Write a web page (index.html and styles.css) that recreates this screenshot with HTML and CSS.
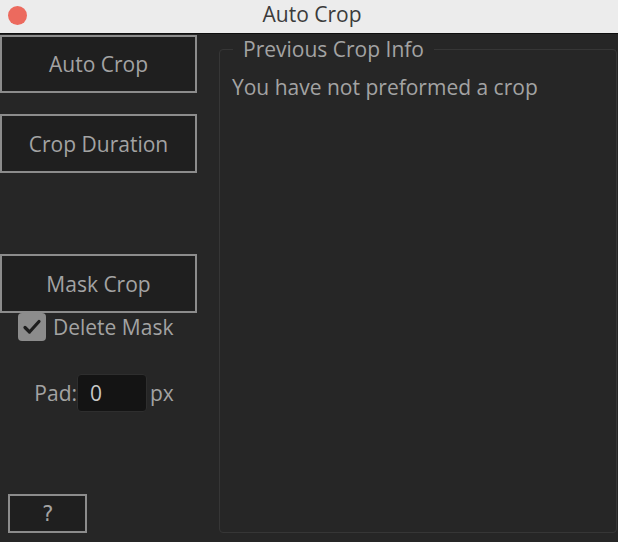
FILE: index.html
```html
<!DOCTYPE html>
<html lang="en">

<head>
  <meta charset="UTF-8">
  <meta name="viewport" content="width=device-width, initial-scale=1.0">
  <title>Auto Crop</title>
  <link rel="stylesheet" href="styles.css">
</head>

<body>
  <header class="titlebar">
    <span class="close-dot"></span>
    <span class="title">Auto Crop</span>
  </header>

  <main class="panel">
    <div class="controls">
      <button class="btn btn-auto">Auto Crop</button>
      <button class="btn btn-duration">Crop Duration</button>
      <button class="btn btn-mask">Mask Crop</button>

      <label class="check-row">
        <span class="check-box">
          <svg width="20" height="20" viewBox="0 0 20 20">
            <path d="M3 10.5 L7.5 15 L17 4.5" fill="none" stroke="#1e1e1e" stroke-width="3.2" stroke-linecap="round" stroke-linejoin="round" />
          </svg>
        </span>
        <span>Delete Mask</span>
      </label>

      <div class="pad-row">
        <span class="pad-label">Pad:</span>
        <input type="text" class="pad-input" value="0">
        <span class="pad-unit">px</span>
      </div>

      <button class="btn btn-help">?</button>
    </div>

    <fieldset class="info">
      <legend>Previous Crop Info</legend>
      <p class="info-text">You have not preformed a crop</p>
    </fieldset>
  </main>
</body>

</html>
```

FILE: styles.css
```css
* {
  box-sizing: border-box;
  margin: 0;
  padding: 0;
  font-family: "Open Sans", "Noto Sans", sans-serif;
}

body {
  width: 618px;
  height: 542px;
  background-color: #262626;
  color: #a3a3a3;
  overflow: hidden;
}

.titlebar {
  height: 34px;
  background-color: #ececec;
  border-bottom: 1px solid #0e0e0e;
  display: flex;
  align-items: center;
  justify-content: center;
  position: relative;
}

.close-dot {
  position: absolute;
  left: 8px;
  top: 6px;
  width: 19px;
  height: 19px;
  border-radius: 50%;
  background-color: #ec6a5e;
}

.title {
  font-size: 21px;
  color: #3b3b3b;
  margin-left: 6px;
  margin-top: -5px;
}

.panel {
  display: flex;
  height: 508px;
}

.controls {
  width: 198px;
  display: flex;
  flex-direction: column;
  padding-top: 1px;
  padding-bottom: 9px;
}

.btn {
  width: 197px;
  height: 58px;
  background-color: #1f1f1f;
  border: 2px solid #8c8c8c;
  color: #a3a3a3;
  font-size: 21px;
  font-family: "Open Sans", "Noto Sans", sans-serif;
}

.btn-duration {
  margin-top: 21px;
  height: 59px;
}

.btn-mask {
  margin-top: 81px;
  height: 59px;
}

.check-row {
  display: flex;
  align-items: center;
  gap: 7px;
  margin-left: 18px;
  font-size: 21px;
}

.check-box {
  width: 28px;
  height: 28px;
  border-radius: 4px;
  background-color: #8c8c8c;
  display: flex;
  align-items: center;
  justify-content: center;
}

.pad-row {
  display: flex;
  align-items: center;
  margin-top: 33px;
  font-size: 21px;
}

.pad-label {
  width: 77px;
  text-align: right;
}

.pad-input {
  width: 70px;
  height: 38px;
  background-color: #141414;
  border: 1px solid #2e2e2e;
  border-radius: 4px;
  color: #c8c8c8;
  font-size: 21px;
  font-family: "Open Sans", "Noto Sans", sans-serif;
  padding-left: 12px;
}

.pad-unit {
  margin-left: 3px;
}

.btn-help {
  margin-top: auto;
  margin-left: 8px;
  width: 79px;
  height: 39px;
  font-size: 21px;
  font-family: "DejaVu Sans Mono", monospace;
}

.info {
  flex: 1;
  margin: 5px 1px 9px 21px;
  border: 1px solid #363636;
  border-radius: 4px;
  padding: 0 12px;
}

.info legend {
  margin-left: 1px;
  padding: 0 10px;
  font-size: 21px;
  line-height: 20px;
}

.info-text {
  font-size: 21px;
  margin-top: 14px;
}
```
